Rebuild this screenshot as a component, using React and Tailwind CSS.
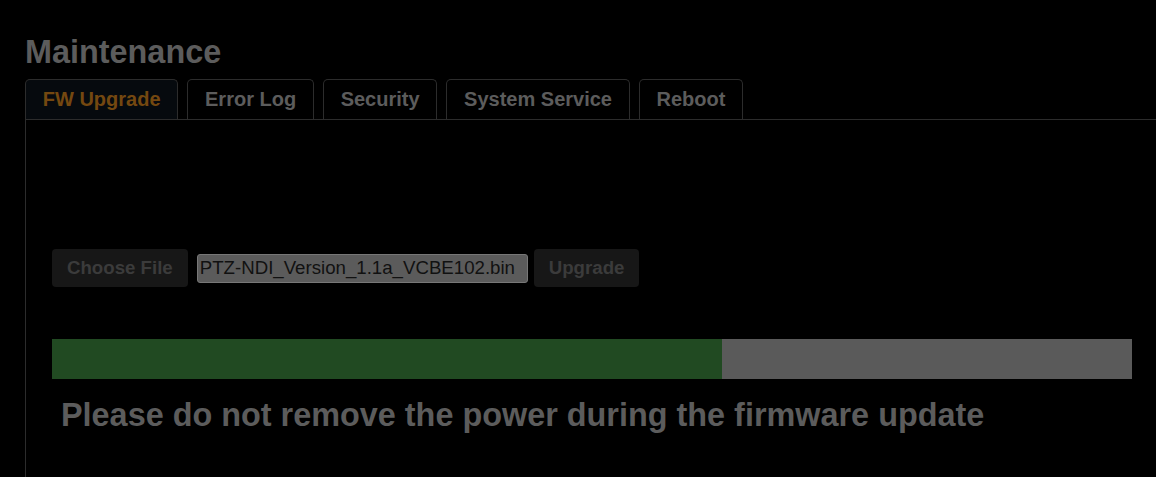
import React from "react";

const tabs = ["FW Upgrade", "Error Log", "Security", "System Service", "Reboot"];

function Tab({ label, active }) {
  return (
    <div
      className={
        "rounded-t-[5px] border border-b-0 border-[#2c2c2c] px-[16.75px] py-2 text-[20px] leading-[23px] font-bold " +
        (active ? "bg-[#060a0e] text-[#744810]" : "bg-black text-[#5c5c5c]")
      }
    >
      {label}
    </div>
  );
}

export default function App() {
  return (
    <div className="h-[477px] overflow-hidden bg-black font-['Liberation_Sans',Arial,sans-serif]">
      <h1 className="pl-[25px] pt-[34px] text-[32.4px] leading-[36px] font-bold text-[#5c5c5c]">
        Maintenance
      </h1>
      <div className="mt-[9px] flex gap-[9px] pl-[25px]">
        {tabs.map((t, i) => (
          <Tab key={t} label={t} active={i === 0} />
        ))}
      </div>
      <div className="ml-[25px] h-[358px] border-l border-t border-[#2c2c2c] pl-[26px] pr-[24px] pt-[129px]">
        <div className="flex h-[38px] items-center">
          <button className="flex h-[38px] items-center rounded-[4px] bg-[#171717] px-[15px] text-[18.67px] font-bold text-[#3b3b3b]">
            Choose File
          </button>
          <div className="ml-[9px] flex h-[29px] w-[331px] items-center rounded-[3px] border border-[#777] bg-[#5b5b5b] pl-[2px] text-[18.67px] text-[#111]">
            PTZ-NDI_Version_1.1a_VCBE102.bin
          </div>
          <button className="ml-[6px] flex h-[38px] items-center rounded-[4px] bg-[#171717] px-[15px] text-[18.67px] font-bold text-[#3b3b3b]">
            Upgrade
          </button>
        </div>
        <div className="mt-[52px] flex h-[40px]">
          <div className="w-[670px] bg-[#214a22]" />
          <div className="flex-1 bg-[#5a5a5a]" />
        </div>
        <div className="mt-[17px] pl-[9px] text-[32.4px] leading-[38px] font-bold text-[#5c5c5c]">
          Please do not remove the power during the firmware update
        </div>
      </div>
    </div>
  );
}
